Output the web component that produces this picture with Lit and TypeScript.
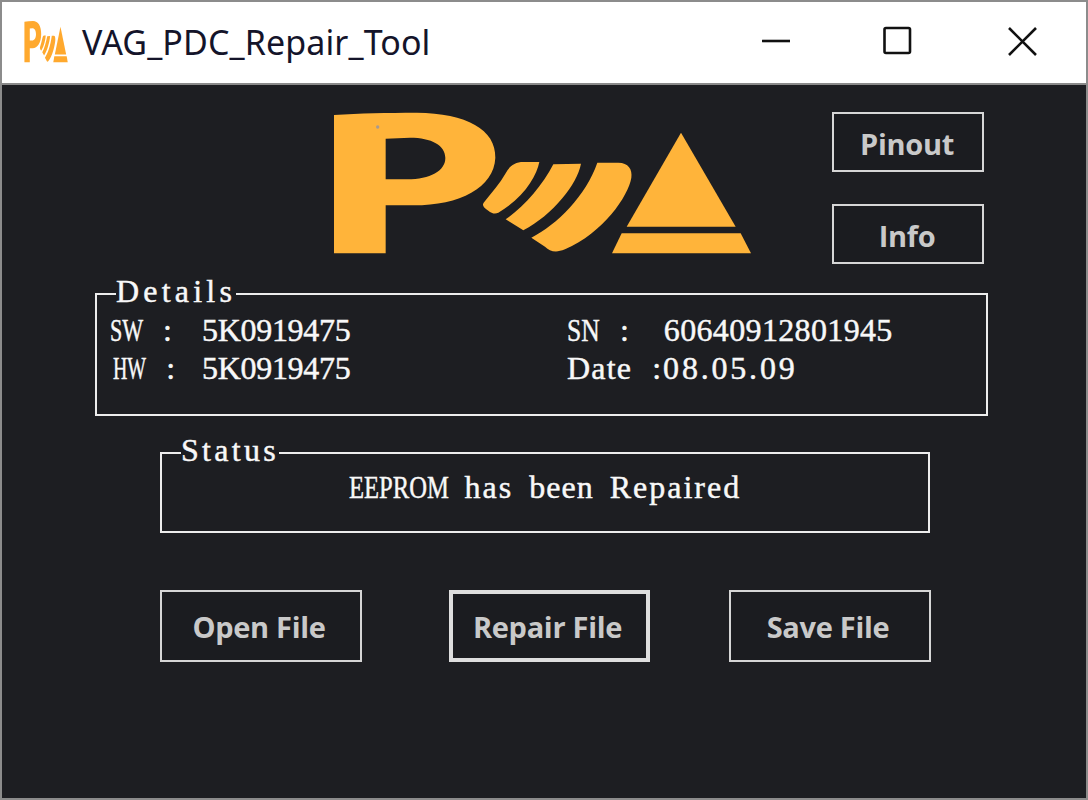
import { LitElement, html, css, svg } from "lit";
import { customElement } from "lit/decorators.js";

const logoShapes = svg`
  <path fill-rule="evenodd" d="M42 57 C120 52 200 50 290 50 C440 52 528 100 526 185 C522 275 420 328 280 328 L197 328 L197 472 L42 472 Z M197 128 L197 250 L262 250 C330 250 376 225 376 186 C376 148 335 125 270 125 Z"/>
  <path d="M491 320 C515 290 540 262 557 232 C568 210 585 198 610 198 L658 198 C650 240 612 305 535 350 C525 355 515 352 505 344 C490 334 486 328 491 320 Z"/>
  <path d="M557 370 C612 332 668 268 700 205 L783 203 C771 265 700 355 610 403 Z"/>
  <path d="M634 425 C712 385 797 300 832 200 L895 200 C925 200 938 220 934 245 C925 300 850 410 735 460 C705 472 690 465 675 452 Z"/>
  <path d="M1083 110 L1247 392 L920 392 Z"/>
  <path d="M905 412 L1262 412 L1293 472 L876 472 Z"/>
`;

@customElement("app-root")
export class AppRoot extends LitElement {
  static styles = css`
    :host {
      display: block;
      width: 1088px;
      height: 800px;
      overflow: hidden;
    }
    .window {
      box-sizing: border-box;
      width: 1088px;
      height: 800px;
      border: 2px solid #8c8c8c;
      display: flex;
      flex-direction: column;
      background: #1d1e22;
    }
    .titlebar {
      box-sizing: border-box;
      height: 83px;
      flex: none;
      background: #fff;
      border-bottom: 2px solid #8a8a8a;
      display: flex;
      align-items: center;
      padding: 0 0 0 22px;
      color: #14142a;
    }
    .favicon { width: 44px; height: 43px; fill: #ffa92e; flex: none; margin: 0 14px 3px 0; }
    .title {
      font: 400 34px/1 "Noto Sans", sans-serif;
      letter-spacing: 0.1px;
      flex: 1;
      position: relative;
      top: -1px;
    }
    .ctl { flex: none; display: flex; gap: 90px; margin: 0 47px 4px 0; }
    .ctl svg { width: 34px; height: 34px; fill: none; stroke: #111; stroke-width: 2.6; display: block; }
    .client {
      flex: 1;
      display: flex;
      flex-direction: column;
      color: #f2f2f2;
    }
    .top {
      display: flex;
      align-items: flex-start;
      height: 196px;
      padding-top: 11px;
      box-sizing: border-box;
    }
    .logo { width: 440px; height: 170px; margin-left: 318px; flex: none; fill: #ffb43a; display: block; }
    .side {
      margin-left: 72px;
      margin-top: 16px;
      display: flex;
      flex-direction: column;
      gap: 32px;
    }
    button {
      box-sizing: border-box;
      background: #1b1c20;
      color: #c9c9c9;
      border: 2px solid #d6d6d6;
      font: 700 29px/1 "Open Sans", sans-serif;
      letter-spacing: -0.3px;
      margin: 0;
      display: block;
    }
    .small { width: 152px; height: 60px; padding: 3px 2px 0 0; }
    .large { width: 202px; height: 72px; padding: 0 4px 0 0; }
    .focused { border-width: 4px; border-color: #dedede; width: 201px; margin: 0 79px 0 87px; }
    fieldset {
      box-sizing: border-box;
      margin: 0;
      min-width: 0;
      border: 2px solid #ededed;
    }
    legend {
      padding: 0;
      height: 26px;
      overflow: visible;
    }
    .t {
      font: 400 32px/26px "Liberation Serif", serif;
      white-space: pre;
      display: inline-block;
      color: #f8f8f8;
      -webkit-text-stroke: 0.45px #f8f8f8;
    }
    legend .t { line-height: 20px; }
    .cond { transform: scaleX(0.69); transform-origin: left center; margin-right: -15px; }
    .cond-sn { transform: scaleX(0.8); transform-origin: left center; margin-right: -8px; }
    .cond-hw { transform: scaleX(0.62); transform-origin: left center; margin-right: -20px; }
    .cond-ee { transform: scaleX(0.77); transform-origin: left center; margin-right: -30px; }
    .colon { margin-left: 20px; }
    .details {
      width: 893px;
      height: 135px;
      margin-left: 93px;
      padding: 0 0 0 13px;
    }
    .details legend { margin-left: 6px; letter-spacing: 4.2px; }
    .rows {
      display: grid;
      grid-template-columns: 92px 365px 1fr;
      grid-auto-rows: 38px;
      margin-top: 4px;
      align-items: center;
    }
    .row-label { display: flex; }
    .hw { padding-left: 3px; }
    .sw-val { letter-spacing: -0.3px; }
    .sn-val { letter-spacing: 0.35px; margin-left: 35px; }
    .date { letter-spacing: 1.2px; }
    .date-val { letter-spacing: 2.8px; margin-left: 2px; }
    .status {
      width: 770px;
      height: 93px;
      margin: 24px 0 0 158px;
      padding: 0;
    }
    .status legend { margin-left: 19px; letter-spacing: 3.3px; }
    .msg { display: flex; justify-content: center; gap: 16px; padding-top: 8px; }
    .sp2 { letter-spacing: 2px; }
    .sp1 { letter-spacing: 1px; }
    .actions {
      display: flex;
      margin: 57px 0 0 158px;
    }
  `;

  render() {
    return html`
      <div class="window">
        <div class="titlebar">
          <svg class="favicon" viewBox="30 40 1270 440" preserveAspectRatio="none">${logoShapes}</svg>
          <div class="title">VAG_PDC_Repair_Tool</div>
          <div class="ctl">
            <svg viewBox="0 0 34 34"><path d="M5 17 H33"/></svg>
            <svg viewBox="0 0 34 34"><rect x="3.5" y="4" width="25.5" height="25" rx="1.5"/></svg>
            <svg viewBox="0 0 34 34"><path d="M4 4 L31 31 M31 4 L4 31"/></svg>
          </div>
        </div>
        <div class="client">
          <div class="top">
            <svg class="logo" viewBox="0 0 1320 510">
              ${logoShapes}
              <circle cx="173" cy="93" r="5" fill="#a89a90"/>
            </svg>
            <div class="side">
              <button class="small">Pinout</button>
              <button class="small">Info</button>
            </div>
          </div>
          <fieldset class="details">
            <legend><span class="t">Details</span></legend>
            <div class="rows">
              <div class="row-label"><span class="t cond">SW</span><span class="t colon">:</span></div>
              <span class="t sw-val">5K0919475</span>
              <div class="row-label"><span class="t cond-sn">SN</span><span class="t colon">:</span><span class="t sn-val">60640912801945</span></div>
              <div class="row-label hw"><span class="t cond-hw">HW</span><span class="t colon">:</span></div>
              <span class="t sw-val">5K0919475</span>
              <div class="row-label"><span class="t date">Date</span><span class="t colon">:</span><span class="t date-val">08.05.09</span></div>
            </div>
          </fieldset>
          <fieldset class="status">
            <legend><span class="t">Status</span></legend>
            <div class="msg">
              <span class="t cond-ee">EEPROM</span>
              <span class="t sp2">has</span>
              <span class="t sp1">been</span>
              <span class="t sp2">Repaired</span>
            </div>
          </fieldset>
          <div class="actions">
            <button class="large">Open File</button>
            <button class="large focused">Repair File</button>
            <button class="large">Save File</button>
          </div>
        </div>
      </div>
    `;
  }
}
